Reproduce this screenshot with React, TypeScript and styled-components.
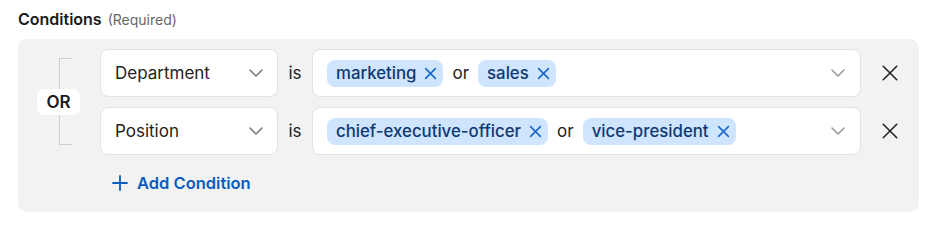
import React from "react"
import styled, { createGlobalStyle } from "styled-components"

const GlobalStyle = createGlobalStyle`
    body {
        margin: 0;
        background: #ffffff;
        font-family: Inter, "Noto Sans", sans-serif;
        color: #1f1f1f;
    }
`

interface Condition {
    field: string
    values: string[]
}

const conditions: Condition[] = [
    { field: "Department", values: ["marketing", "sales"] },
    { field: "Position", values: ["chief-executive-officer", "vice-president"] },
]

const Chevron = ({ color }: { color: string }) => (
    <svg width="16" height="16" viewBox="0 0 16 16" fill="none">
        <path d="M2 5l6 6 6-6" stroke={color} strokeWidth="1.6" strokeLinecap="round" strokeLinejoin="round" />
    </svg>
)

const Cross = ({ size, color, width }: { size: number; color: string; width: number }) => (
    <svg width={size} height={size} viewBox="0 0 16 16" fill="none">
        <path d="M2 2l12 12M14 2L2 14" stroke={color} strokeWidth={width} strokeLinecap="round" />
    </svg>
)

const Plus = () => (
    <svg width="16" height="16" viewBox="0 0 16 16" fill="none">
        <path d="M8 1v14M1 8h14" stroke="#0b5cc0" strokeWidth="1.8" strokeLinecap="round" />
    </svg>
)

const App = () => {
    return (
        <Page>
            <GlobalStyle />
            <Heading>
                <Title>Conditions</Title>
                <Hint>(Required)</Hint>
            </Heading>

            <Panel>
                <Group>
                    <BracketColumn>
                        <Bracket />
                        <OrBadge>OR</OrBadge>
                    </BracketColumn>

                    <Rows>
                        {conditions.map((condition, index) => (
                            <Row key={index}>
                                <FieldSelect>
                                    <FieldLabel>{condition.field}</FieldLabel>
                                    <Chevron color="#7a7a7a" />
                                </FieldSelect>
                                <Operator>is</Operator>
                                <ValueSelect>
                                    <Chips>
                                        {condition.values.map((value, valueIndex) => (
                                            <React.Fragment key={value}>
                                                {valueIndex > 0 && <Joiner>or</Joiner>}
                                                <Chip>
                                                    {value}
                                                    <Cross size={13} color="#1766cc" width={1.9} />
                                                </Chip>
                                            </React.Fragment>
                                        ))}
                                    </Chips>
                                    <Chevron color="#9a9a9a" />
                                </ValueSelect>
                                <RemoveButton>
                                    <Cross size={18} color="#222222" width={1.4} />
                                </RemoveButton>
                            </Row>
                        ))}
                    </Rows>
                </Group>

                <AddButton>
                    <Plus />
                    Add Condition
                </AddButton>
            </Panel>
        </Page>
    )
}

const Page = styled.div`
    padding: 9px 19px 0 18px;
`

const Heading = styled.div`
    display: flex;
    align-items: baseline;
    gap: 6px;
    height: 20px;
    margin-bottom: 10px;
`

const Title = styled.span`
    font-size: 16px;
    font-weight: 600;
    color: #1a1a1a;
`

const Hint = styled.span`
    font-size: 14px;
    color: #666666;
`

const Panel = styled.div`
    display: flex;
    flex-direction: column;
    background: #f2f2f2;
    border-radius: 9px;
    padding: 10px 17px 11px 19px;
`

const Group = styled.div`
    display: flex;
    gap: 20px;
`

const BracketColumn = styled.div`
    position: relative;
    width: 43px;
    display: flex;
`

const Bracket = styled.div`
    margin: 9px 0 10px 22px;
    width: 12px;
    border: 1px solid #cfcfcf;
    border-right: none;
`

const OrBadge = styled.div`
    position: absolute;
    left: 0;
    top: 50%;
    transform: translateY(-50%);
    width: 43px;
    height: 26px;
    border-radius: 7px;
    background: #ffffff;
    display: flex;
    align-items: center;
    justify-content: center;
    font-size: 17px;
    font-weight: 600;
    color: #1a1a1a;
`

const Rows = styled.div`
    flex: 1;
    display: flex;
    flex-direction: column;
    gap: 10px;
`

const Row = styled.div`
    display: flex;
    align-items: center;
`

const Box = styled.div`
    height: 48px;
    box-sizing: border-box;
    display: flex;
    align-items: center;
    background: #ffffff;
    border: 1px solid #e2e2e2;
    border-radius: 8px;
`

const FieldSelect = styled(Box)`
    width: 178px;
    justify-content: space-between;
    padding: 0 13px 0 14px;
`

const FieldLabel = styled.span`
    font-size: 17px;
    color: #222222;
`

const Operator = styled.span`
    width: 34px;
    text-align: center;
    font-size: 17px;
    color: #222222;
`

const ValueSelect = styled(Box)`
    flex: 1;
    justify-content: space-between;
    padding: 0 14px 0 14px;
`

const Chips = styled.div`
    display: flex;
    align-items: center;
    gap: 9px;
`

const Chip = styled.span`
    display: inline-flex;
    align-items: center;
    gap: 8px;
    height: 27px;
    padding: 0 6px 0 9px;
    border-radius: 8px;
    background: #cfe4fd;
    color: #0d3a72;
    font-size: 16.8px;
    font-weight: 500;
`

const Joiner = styled.span`
    font-size: 17px;
    color: #222222;
`

const RemoveButton = styled.button`
    margin-left: 17px;
    width: 24px;
    height: 24px;
    padding: 0;
    border: none;
    background: none;
    display: flex;
    align-items: center;
    justify-content: center;
`

const AddButton = styled.button`
    align-self: flex-start;
    margin: 10px 0 0 63px;
    height: 36px;
    padding: 0 12px 0 12px;
    border: none;
    background: none;
    display: flex;
    align-items: center;
    gap: 9px;
    font-family: Inter, "Noto Sans", sans-serif;
    font-size: 16.5px;
    font-weight: 600;
    color: #0b5cc0;
`

export default App
